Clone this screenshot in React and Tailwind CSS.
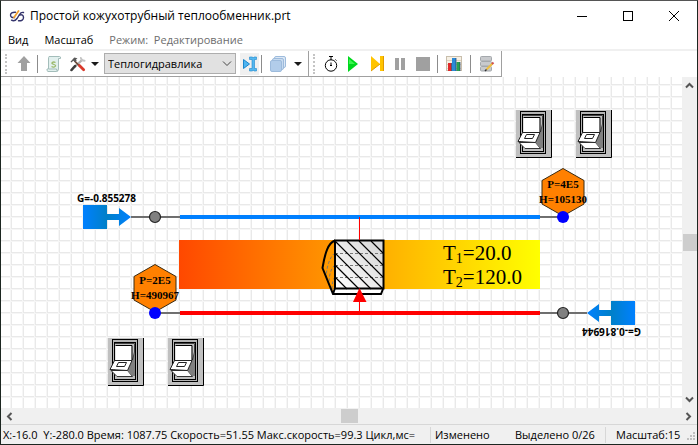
// ============================================
// SCHEME WINDOW - окно расчётной схемы
// Меню, панель инструментов, холст схемы, строка состояния
// ============================================

import React, { useState } from 'react'

const switches = [
  { id: 'sw1', label: 'Выключатель 1', pos: 'left-[515px] top-[33px]' },
  { id: 'sw2', label: 'Выключатель 2', pos: 'left-[575px] top-[33px]' },
  { id: 'sw3', label: 'Выключатель 3', pos: 'left-[107px] top-[261px]' },
  { id: 'sw4', label: 'Выключатель 4', pos: 'left-[167px] top-[261px]' }
]

/* ---------- Иконки ---------- */

function LogoIcon() {
  return (
    <svg width="16" height="16" viewBox="0 0 16 16" fill="none" stroke="#34346c" strokeLinecap="round" strokeWidth="1.400">
      <path d="M6.500 4.200Q1.500 4 1.500 7T5.500 9.500" />
      <path d="M9.500 12.800Q14.500 13 14.500 9.500T10.500 7" />
      <path d="M2.500 12.200Q5.500 14 8 10.500L10.500 6.500Q12 4 14.500 4.500" />
      <path d="M5 9.500 9.500 3" stroke="#f0a030" strokeWidth="1.800" />
    </svg>
  )
}

function UpIcon() {
  return (
    <svg width="14" height="16" viewBox="0 0 14 16">
      <path d="M7 0 13.500 7H10V15H4V7H.5Z" fill="#a0a0a0" />
    </svg>
  )
}

function ScriptIcon() {
  return (
    <svg width="16" height="16" viewBox="0 0 16 16">
      <path d="M3 .5H13.500Q15 .5 14.500 2.500H12.500V13Q12.500 15.500 10 15.500H2Q.5 15 1 13H2.500V3Q2.500 1 3 .5Z" fill="#e2f0ee" stroke="#a3bdba" />
      <path d="M3 13H10.500Q10.500 15 12 15" fill="none" stroke="#a3bdba" />
      <path d="M9.500 6.500Q7.500 5.500 6.300 6.500T8 8.500 8.500 10.800Q7 11.500 5.500 10.500" fill="none" stroke="#9cba6c" strokeWidth="1.300" />
    </svg>
  )
}

function ToolsIcon() {
  return (
    <svg width="17" height="16" viewBox="0 0 17 16" strokeLinecap="round">
      <path d="M12.500 4 5 11" stroke="#b4b4b4" strokeWidth="2.500" />
      <path d="M11.500 1.500Q12 4.500 15.500 4.500" fill="none" stroke="#c4c4c4" strokeWidth="2" />
      <path d="M5.500 10 1.500 14.500" stroke="#3c3c3c" strokeWidth="2.500" />
      <path d="M5 5 10 10" stroke="#6d4a3a" strokeWidth="1.800" />
      <path d="M10 9.500 14.500 14" stroke="#d83a2c" strokeWidth="3" />
      <path d="M.5 5.500 4.500 1.200 8 2 6.500 3 7 4.500 5.500 6 3.500 4.500 1.500 6.500Z" fill="#5a5a5a" />
    </svg>
  )
}

function CursorIcon() {
  return (
    <svg width="14" height="16" viewBox="0 0 14 16">
      <path d="M.5 3.500 6.500 8 .5 12.500Z" fill="#4db4f0" stroke="#1d86cc" />
      <path d="M6.500 1H9.500L10.200 2 11 1H13.500V3.500H11.500V12.500H13.500V15H11L10.200 14 9.500 15H6.500V12.500H9V3.500H6.500Z" fill="#55b8f0" stroke="#1d86cc" strokeWidth=".6" />
    </svg>
  )
}

function LayersIcon() {
  return (
    <svg width="16" height="16" viewBox="0 0 16 16" stroke="#9dbbdc">
      <rect x="4.500" y=".5" width="11" height="11" rx="1.500" fill="#dce8f6" />
      <rect x="2.500" y="2.500" width="11" height="11" rx="1.500" fill="#c8dbf0" />
      <rect x=".5" y="4.500" width="11" height="11" rx="1.500" fill="#b2cdea" />
    </svg>
  )
}

function TimerIcon() {
  return (
    <svg width="14" height="16" viewBox="0 0 14 16" fill="none" stroke="#000">
      <circle cx="7" cy="9.500" r="5.700" />
      <path d="M5 .5H9M7 .5V4M7 6.500V10M11.500 3.500 12.500 4.500M6 9.500H8" />
    </svg>
  )
}

function PlayIcon() {
  return (
    <svg width="10" height="16" viewBox="0 0 10 16">
      <path d="M0 0 10 8 0 16Z" fill="#00d81e" />
      <path d="M1 3 7 8H1Z" fill="#3cf650" />
    </svg>
  )
}

function StepIcon() {
  return (
    <svg width="13" height="16" viewBox="0 0 13 16">
      <path d="M0 0 9 8 0 15Z" fill="#ffc400" />
      <rect x="9" y="0" width="3" height="15" fill="#ffc400" />
      <path d="M12.500 0V15M0 15 9 8" stroke="#e09a00" />
    </svg>
  )
}

function PauseIcon() {
  return (
    <svg width="11" height="16" viewBox="0 0 11 16" fill="#a0a0a0">
      <rect x="0" y="2" width="4" height="12" />
      <rect x="6" y="2" width="4" height="12" />
    </svg>
  )
}

function StopIcon() {
  return (
    <svg width="14" height="16" viewBox="0 0 14 16">
      <rect y="1" width="14" height="14" fill="#a0a0a0" />
    </svg>
  )
}

function ChartIcon() {
  return (
    <svg width="16" height="16" viewBox="0 0 16 16">
      <rect x=".5" y=".5" width="15" height="14" fill="#f6f0e4" stroke="#c8beac" />
      <path d="M1 4.500H15M1 8.500H15M1 12.500H15" stroke="#ddd2c0" />
      <rect x="2" y="7" width="3.500" height="8" fill="#e02828" />
      <rect x="6" y="2" width="4" height="13" fill="#2c8ad8" />
      <rect x="10.500" y="6" width="3.500" height="9" fill="#28a050" />
      <path d="M5.500 7V15M10 2V15M14 6V15" stroke="#20406a" strokeWidth=".7" />
    </svg>
  )
}

function DatabaseIcon() {
  return (
    <svg width="15" height="16" viewBox="0 0 15 16">
      <rect x=".5" y=".5" width="11" height="4.500" rx="1" fill="#c8cacd" stroke="#a4a8ac" />
      <rect x=".5" y="5.500" width="11" height="4.500" rx="1" fill="#c8cacd" stroke="#a4a8ac" />
      <rect x=".5" y="10.500" width="11" height="4.500" rx="1" fill="#c8cacd" stroke="#a4a8ac" />
      <path d="M6.500 13.500 12.500 7.500" stroke="#f0c040" strokeWidth="2" />
      <path d="M12 8 13.500 6.500" stroke="#d05050" strokeWidth="2" />
      <path d="M5 15 6.500 13.500" stroke="#303030" strokeWidth="1.500" />
    </svg>
  )
}

function Caret() {
  return (
    <svg width="8" height="4" viewBox="0 0 8 4">
      <path d="M0 0H8L4 4Z" fill="#1a1a1a" />
    </svg>
  )
}

function ScrollArrow({ rotate }) {
  return (
    <svg width="9" height="9" viewBox="0 0 9 9" className={rotate}>
      <path d="M1 6.500 4.500 3 8 6.500" fill="none" stroke="#555" strokeWidth="2" />
    </svg>
  )
}

/* ---------- Элементы панели ---------- */

function ToolButton({ label, width, children }) {
  return (
    <button type="button" aria-label={label} className={`flex h-[22px] shrink-0 items-center justify-center ${width}`}>
      {children}
    </button>
  )
}

function Grip() {
  return <span className="mr-1 h-5 w-0 border-l-2 border-dotted border-[#c4c4c4]" />
}

function Separator() {
  return <span className="h-[18px] w-px shrink-0 bg-[#8c8c8c]" />
}

/* ---------- Схема ---------- */

function RockerSwitch({ label, pos }) {
  const [on, setOn] = useState(false)

  return (
    <button
      type="button"
      role="switch"
      aria-checked={on}
      aria-label={label}
      onClick={() => setOn(!on)}
      className={`absolute ${pos}`}
    >
      <svg width="36" height="48" viewBox="0 0 36 48">
        <rect width="36" height="48" fill="#c0c0c0" />
        <path d="M35.500 0V47.500H0" fill="none" stroke="#000" />
        <rect x="4.500" y="1.500" width="25" height="42" fill="#b4b4b4" stroke="#000" />
        <rect x="6.500" y="4.500" width="21" height="37" fill="#c0c0c0" stroke="#000" />
        <path d="M24 23 27 13V38H24Z" fill="#808080" />
        <path d="M7 5.500H26.500V14L24.500 22" fill="none" stroke="#444" />
        <rect x="7.500" y="7.500" width="16" height="15" fill="#fff" />
        <path d="M7.500 7.500H24V22" fill="none" stroke="#000" />
        <path d="M3 32.500H19.500L24.500 38.500H9Z" fill="#fff" stroke="#333" />
        <path d="M24 22.500 19.500 32.500 24.500 38.500Z" fill="#808080" />
        <path d="M6.500 22.500H24L19.500 32.500 2 31.500Z" fill="#fff" stroke="#222" />
        <path d="M10.500 24.500H18.500L16.500 28.500H8.500Z" fill="#fff" stroke="#222" />
      </svg>
    </button>
  )
}

function FlowSource({ value }) {
  return (
    <g>
      <text x="77" y="202" fontSize="10" fontWeight="700" fontFamily="Noto Sans, sans-serif">{value}</text>
      <rect x="83" y="205" width="24" height="24" fill="url(#source)" />
      <path d="M107 214H119V208L131 217 119 226V220H107Z" fill="url(#shaft)" />
      <path d="M131 217H150M160 217H180" stroke="#444" strokeWidth="1.500" />
      <circle cx="155" cy="217" r="5.500" fill="#808080" stroke="#222" strokeWidth="1.200" />
    </g>
  )
}

function PressureNode({ x, y, pressure, enthalpy }) {
  return (
    <g transform={`translate(${x} ${y})`}>
      <path d="M0-48.500 21-36.500V-13L0-1-21-13V-36.500Z" fill="#ff8000" stroke="#3a2a10" />
      <g fontSize="11" fontWeight="700" fontFamily="Liberation Serif, serif" textAnchor="middle">
        <text y="-29">{pressure}</text>
        <text y="-14">{enthalpy}</text>
      </g>
      <circle r="6" fill="#00f" />
    </g>
  )
}

function Exchanger() {
  return (
    <g>
      <rect x="179" y="240" width="361" height="49" fill="url(#heat)" />
      <path d="M180 217H540" stroke="#0080ff" strokeWidth="4" />
      <path d="M180 313H540" stroke="#f00" strokeWidth="4" />
      <path d="M540 217H558" stroke="#444" strokeWidth="1.500" />
      <path d="M160 313H180" stroke="#444" strokeWidth="1.500" />

      {/* Стенка */}
      <path d="M335 240.500C328 243 325 253 322.500 268L333 294V289L335 289Z" fill="#ff9900" />
      <rect x="335" y="240.500" width="48.500" height="48" fill="url(#wall)" />
      <path d="M333.500 289H382L381 294.500H334Z" fill="#fff" />
      <path d="M335 253Q328 258 326 276M335 265Q329 270 329 284M335 277Q332 280 332 290M335 253.500H383M335 265.500H383M335 277.500H383" fill="none" stroke="#777" strokeDasharray="3 2" />
      <path d="M335 241 383 289M335 253 371 289M335 265 359 289M335 277 347 289M347 241 383 277M359 241 383 265M371 241 383 253" stroke="#000" strokeWidth="1.200" />
      <path d="M335 240.500C328 243 325 253 322.500 268L333 294H381L383 289M333 294 335 288" fill="none" stroke="#000" strokeWidth="2" />
      <rect x="335" y="240.500" width="48.500" height="48" fill="none" stroke="#000" strokeWidth="2" />

      {/* Направление теплового потока */}
      <path d="M359.500 217V240M359.500 301V313" stroke="#f00" />
      <path d="M359.500 288 366.500 302H353Z" fill="#f00" />

      <g fontSize="21" fontFamily="Liberation Serif, serif">
        <text x="443" y="260">T<tspan fontSize="14" dy="3">1</tspan><tspan dy="-3">=20.0</tspan></text>
        <text x="443" y="284">T<tspan fontSize="14" dy="3">2</tspan><tspan dy="-3">=120.0</tspan></text>
      </g>
    </g>
  )
}

function Scheme() {
  return (
    <div className="relative min-w-0 flex-1 overflow-hidden bg-white">
      <svg className="absolute inset-0 h-full w-full">
        <defs>
          <pattern id="grid" width="12" height="12" patternUnits="userSpaceOnUse">
            <path d="M11.500 0V12M0 .5H12" stroke="#e9e9e9" />
            <path d="M10.500 0V12M0 1.500H12" stroke="#f6f6f6" />
          </pattern>
          <linearGradient id="heat">
            <stop offset="0" stopColor="#ff4800" />
            <stop offset="1" stopColor="#ff0" />
          </linearGradient>
          <linearGradient id="wall" x1="0" y1="1" x2="1" y2="0">
            <stop offset="0" stopColor="#fff" />
            <stop offset="1" stopColor="#d4d4d4" />
          </linearGradient>
          <linearGradient id="source">
            <stop offset="0" stopColor="#0080ff" />
            <stop offset="1" stopColor="#0080c8" />
          </linearGradient>
          <linearGradient id="shaft">
            <stop offset="0" stopColor="#0080c8" />
            <stop offset="1" stopColor="#0080ff" />
          </linearGradient>
        </defs>
        <g transform="translate(-1 -77)">
          <rect y="72" width="4000" height="4000" fill="url(#grid)" />
          <FlowSource value="G=-0.855278" />
          <g transform="rotate(180 359 265)">
            <FlowSource value="G=-0.816944" />
          </g>
          <Exchanger />
          <PressureNode x={155} y={313} pressure="P=2E5" enthalpy="H=490967" />
          <PressureNode x={563} y={217} pressure="P=4E5" enthalpy="H=105130" />
        </g>
      </svg>
      {switches.map(s => (
        <RockerSwitch key={s.id} label={s.label} pos={s.pos} />
      ))}
    </div>
  )
}

export default function App() {
  const [solver, setSolver] = useState('Теплогидравлика')

  return (
    <div className="flex h-screen flex-col overflow-hidden border border-t-[#555] border-r-[#1c2620] border-b-[#1c2620] border-l-[#1c2620] bg-white font-['Open_Sans',sans-serif] text-[11px] leading-4 text-black">
      {/* Заголовок */}
      <header className="flex h-[30px] shrink-0 items-center pl-2">
        <LogoIcon />
        <h1 className="ml-[5px] flex-1 text-[12px] whitespace-nowrap">Простой кожухотрубный теплообменник.prt</h1>
        <button type="button" aria-label="Свернуть" className="flex h-full w-[46px] items-center justify-center">
          <svg width="10" height="10"><path d="M0 5.500H10" stroke="#000" /></svg>
        </button>
        <button type="button" aria-label="Развернуть" className="flex h-full w-[46px] items-center justify-center">
          <svg width="10" height="10"><rect x=".5" y=".5" width="9" height="9" fill="none" stroke="#000" /></svg>
        </button>
        <button type="button" aria-label="Закрыть" className="flex h-full w-[46px] items-center justify-center">
          <svg width="10" height="10"><path d="M0 0 10 10M10 0 0 10" stroke="#000" /></svg>
        </button>
      </header>

      {/* Меню */}
      <nav className="flex h-5 shrink-0 items-center gap-4 border-b-2 border-[#f0f0f0] pl-[7px] whitespace-pre">
        <button type="button">Вид</button>
        <button type="button">Масштаб</button>
        <button type="button" disabled className="text-[#6d6d6d]">Режим:  Редактирование</button>
      </nav>

      {/* Панель инструментов */}
      <div className="flex h-[26px] shrink-0">
        <div className="flex w-[308px] shrink-0 items-center border-r border-b border-[#a0a0a0] pl-1">
          <Grip />
          <ToolButton label="На уровень выше" width="w-[26px]"><UpIcon /></ToolButton>
          <Separator />
          <ToolButton label="Скрипт" width="w-8"><ScriptIcon /></ToolButton>
          <ToolButton label="Параметры расчёта" width="w-4"><ToolsIcon /></ToolButton>
          <ToolButton label="Другие параметры" width="w-[18px]"><Caret /></ToolButton>
          <div className="relative h-[21px] w-[132px] shrink-0">
            <select
              aria-label="Тип схемы"
              value={solver}
              onChange={e => setSolver(e.target.value)}
              className="h-full w-full appearance-none border border-[#adadad] bg-[#e1e1e1] pl-[3px] text-[11px]"
            >
              <option>Теплогидравлика</option>
            </select>
            <svg width="10" height="6" viewBox="0 0 10 6" className="pointer-events-none absolute top-2 right-1">
              <path d="M1 .5 5 4.500 9 .5" fill="none" stroke="#444" />
            </svg>
          </div>
          <span className="mr-[2px] ml-1 flex bg-[#f0f0f0]">
            <ToolButton label="Вставить" width="w-[19px]"><CursorIcon /></ToolButton>
          </span>
          <Separator />
          <ToolButton label="Слои" width="w-8"><LayersIcon /></ToolButton>
          <ToolButton label="Список слоёв" width="w-2"><Caret /></ToolButton>
        </div>
        <div className="flex w-[193px] shrink-0 items-center border-r border-b border-[#a0a0a0] pl-1">
          <Grip />
          <ToolButton label="Время" width="w-6"><TimerIcon /></ToolButton>
          <ToolButton label="Пуск" width="w-5"><PlayIcon /></ToolButton>
          <ToolButton label="Шаг" width="w-7"><StepIcon /></ToolButton>
          <ToolButton label="Пауза" width="w-[18px]"><PauseIcon /></ToolButton>
          <ToolButton label="Стоп" width="w-7"><StopIcon /></ToolButton>
          <Separator />
          <ToolButton label="Графики" width="w-8"><ChartIcon /></ToolButton>
          <Separator />
          <ToolButton label="База данных" width="w-8"><DatabaseIcon /></ToolButton>
        </div>
      </div>

      {/* Холст */}
      <div className="flex min-h-0 flex-1">
        <Scheme />
        <div className="flex w-[15px] shrink-0 flex-col items-center justify-between bg-[#f0f0f0]">
          <button type="button" aria-label="Прокрутить вверх" className="flex h-[17px] w-full items-center justify-center"><ScrollArrow /></button>
          <span className="h-[17px] w-[14px] bg-[#cdcdcd]" />
          <button type="button" aria-label="Прокрутить вниз" className="flex h-[17px] w-full items-center justify-center"><ScrollArrow rotate="rotate-180" /></button>
        </div>
      </div>
      <div className="flex h-4 shrink-0 items-center justify-between bg-[#f0f0f0]">
        <button type="button" aria-label="Прокрутить влево" className="flex h-full w-[17px] items-center justify-center"><ScrollArrow rotate="-rotate-90" /></button>
        <span className="h-[14px] w-[17px] bg-[#cdcdcd]" />
        <button type="button" aria-label="Прокрутить вправо" className="flex h-full w-[17px] items-center justify-center"><ScrollArrow rotate="rotate-90" /></button>
      </div>

      {/* Строка состояния */}
      <footer className="flex h-5 shrink-0 items-center border-t border-[#d7d7d7] bg-[#f0f0f0] whitespace-pre">
        <div className="min-w-0 flex-1 overflow-hidden border-r border-[#d7d7d7] pl-[2px]">
          X:-16.0  Y:-280.0 Время: 1087.75 Скорость=51.55 Макс.скорость=99.3 Цикл,мс=
        </div>
        <div className="w-20 shrink-0 pl-1">Изменено</div>
        <div className="w-[95px] shrink-0 border-r border-[#d7d7d7] pl-1">Выделено 0/26</div>
        <div className="w-[76px] shrink-0 overflow-hidden pl-[10px]">Масштаб:15</div>
        <svg width="15" height="16" viewBox="0 0 15 16" fill="#bfbfbf">
          <path d="M11 5h2v2h-2zM8 8h2v2H8zM11 8h2v2h-2zM5 11h2v2H5zM8 11h2v2H8zM11 11h2v2h-2z" />
        </svg>
      </footer>
    </div>
  )
}
